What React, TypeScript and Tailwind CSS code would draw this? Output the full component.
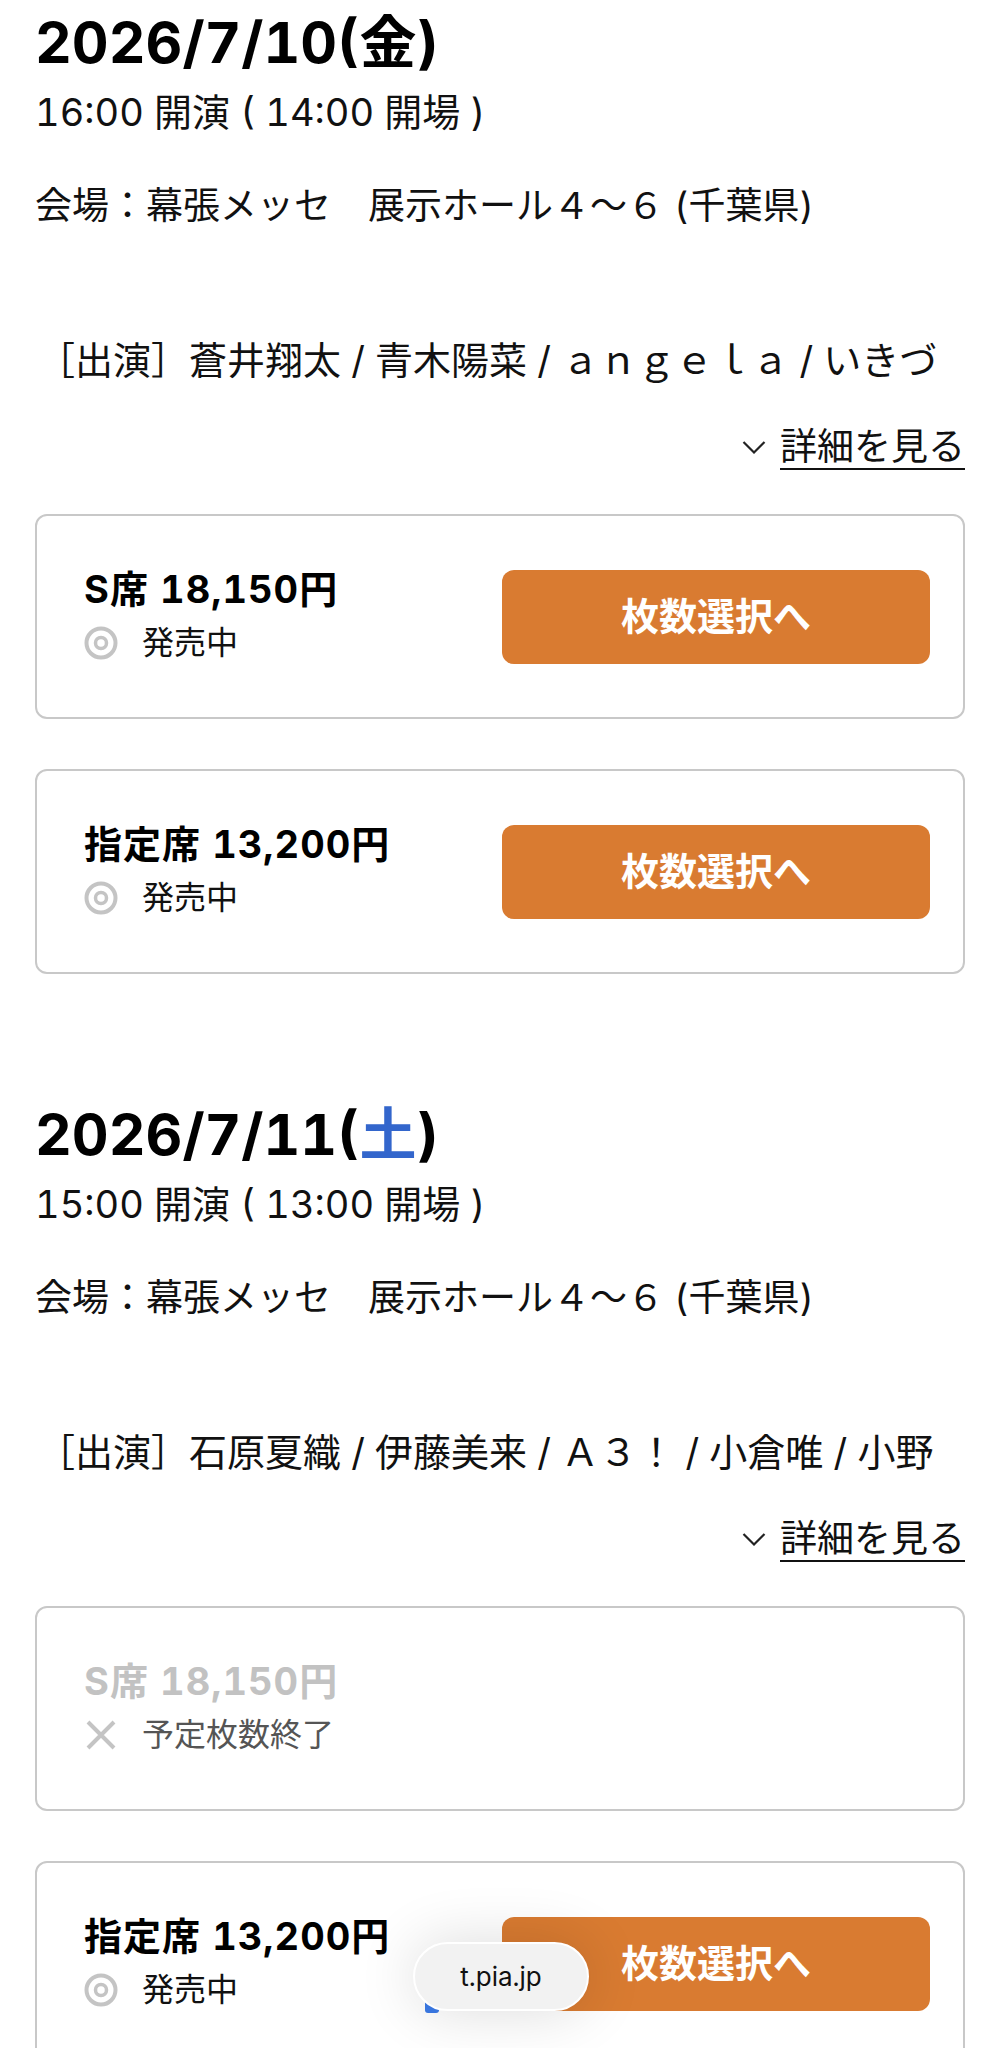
import React from "react";

type Seat = {
  name: string;
  price: string;
  soldOut?: boolean;
};

type Show = {
  date: string;
  dow: string;
  dowBlue?: boolean;
  start: string;
  open: string;
  venue: string;
  cast: string;
  seats: Seat[];
};

const SHOWS: Show[] = [
  {
    date: "2026/7/10",
    dow: "金",
    start: "16:00",
    open: "14:00",
    venue: "会場：幕張メッセ　展示ホール４～６ (千葉県)",
    cast: "［出演］蒼井翔太 / 青木陽菜 / ａｎｇｅｌａ / いきづ",
    seats: [
      { name: "S席", price: "18,150円" },
      { name: "指定席", price: "13,200円" },
    ],
  },
  {
    date: "2026/7/11",
    dow: "土",
    dowBlue: true,
    start: "15:00",
    open: "13:00",
    venue: "会場：幕張メッセ　展示ホール４～６ (千葉県)",
    cast: "［出演］石原夏織 / 伊藤美来 / Ａ３！ / 小倉唯 / 小野",
    seats: [
      { name: "S席", price: "18,150円", soldOut: true },
      { name: "指定席", price: "13,200円" },
    ],
  },
];

function TargetIcon() {
  return (
    <svg width="34" height="34" viewBox="0 0 34 34" fill="none">
      <circle cx="17" cy="17" r="14.5" stroke="#c4c4c4" strokeWidth="4" />
      <circle cx="17" cy="17" r="5.5" stroke="#c4c4c4" strokeWidth="3.5" />
    </svg>
  );
}

function CrossIcon() {
  return (
    <svg width="34" height="34" viewBox="0 0 34 34" fill="none">
      <path d="M4 4L30 30M30 4L4 30" stroke="#c4c4c4" strokeWidth="4" />
    </svg>
  );
}

function ChevronDown() {
  return (
    <svg width="24" height="15" viewBox="0 0 24 15" fill="none">
      <path d="M1.5 2L12 12.5L22.5 2" stroke="#222" strokeWidth="2.2" />
    </svg>
  );
}

function SeatCard({ seat }: { seat: Seat }) {
  return (
    <div className="flex h-[205px] items-center justify-between rounded-[12px] border-2 border-[#c8c8c8] bg-white pl-[47px] pr-[33px]">
      <div className="flex flex-col">
        <p
          className={
            seat.soldOut
              ? "text-[38px] font-bold leading-[48px] tracking-[1px] text-[#c2c2c2]"
              : "text-[38px] font-bold leading-[48px] tracking-[1px] text-black"
          }
        >
          {seat.name} {seat.price}
        </p>
        <div className="mt-[5px] flex h-[50px] items-center gap-[24px]">
          {seat.soldOut ? <CrossIcon /> : <TargetIcon />}
          <span
            className={
              seat.soldOut
                ? "text-[32px] leading-[50px] text-[#555]"
                : "text-[32px] leading-[50px] text-[#111]"
            }
          >
            {seat.soldOut ? "予定枚数終了" : "発売中"}
          </span>
        </div>
      </div>
      {!seat.soldOut && (
        <button className="flex h-[94px] w-[428px] items-center justify-center rounded-[12px] bg-[#d97b31] text-[38px] font-bold text-white">
          枚数選択へ
        </button>
      )}
    </div>
  );
}

function ShowBlock({ show }: { show: Show }) {
  return (
    <section className="pt-[8px]">
      <h2 className="text-[57px] font-bold leading-[70px] text-black">
        {show.date}(
        <span className={show.dowBlue ? "text-[#3366cc]" : ""}>{show.dow}</span>)
      </h2>
      <p className="mt-[10px] text-[38px] leading-[48px] text-[#111]">
        {show.start} 開演 ( {show.open} 開場 )
      </p>
      <p className="mt-[46px] text-[37px] leading-[48px] text-[#111]">{show.venue}</p>
      <p className="mt-[106px] overflow-hidden whitespace-nowrap pl-[2px] text-[38px] leading-[48px] text-[#111]">
        {show.cast}
      </p>
      <div className="mt-[39px] flex justify-end">
        <a className="flex items-center gap-[14px] text-[37px] leading-[48px] text-[#111]">
          <ChevronDown />
          <span className="underline decoration-2 underline-offset-[8px]">詳細を見る</span>
        </a>
      </div>
      <div className="mt-[43px] flex flex-col gap-[50px]">
        {show.seats.map((s) => (
          <SeatCard key={s.name} seat={s} />
        ))}
      </div>
    </section>
  );
}

export default function App() {
  return (
    <div className="relative h-[2048px] overflow-hidden bg-white px-[35px] font-['Inter','Noto_Sans_CJK_JP',sans-serif] tabular-nums">
      <ShowBlock show={SHOWS[0]} />
      <div className="mt-[118px]">
        <ShowBlock show={SHOWS[1]} />
      </div>

      {/* safari url bubble */}
      <div className="absolute left-[413px] top-[1942px]">
        <div className="absolute bottom-[-2px] left-[12px] h-[14px] w-[14px] rounded-[3px] bg-[#3b7be8]" />
        <div className="relative flex h-[69px] w-[176px] items-center justify-center rounded-full border-2 border-white bg-[#f2f2f2] text-[26px] text-[#111] shadow-[0_0_60px_rgba(0,0,0,0.14)]">
          t.pia.jp
        </div>
      </div>
    </div>
  );
}
